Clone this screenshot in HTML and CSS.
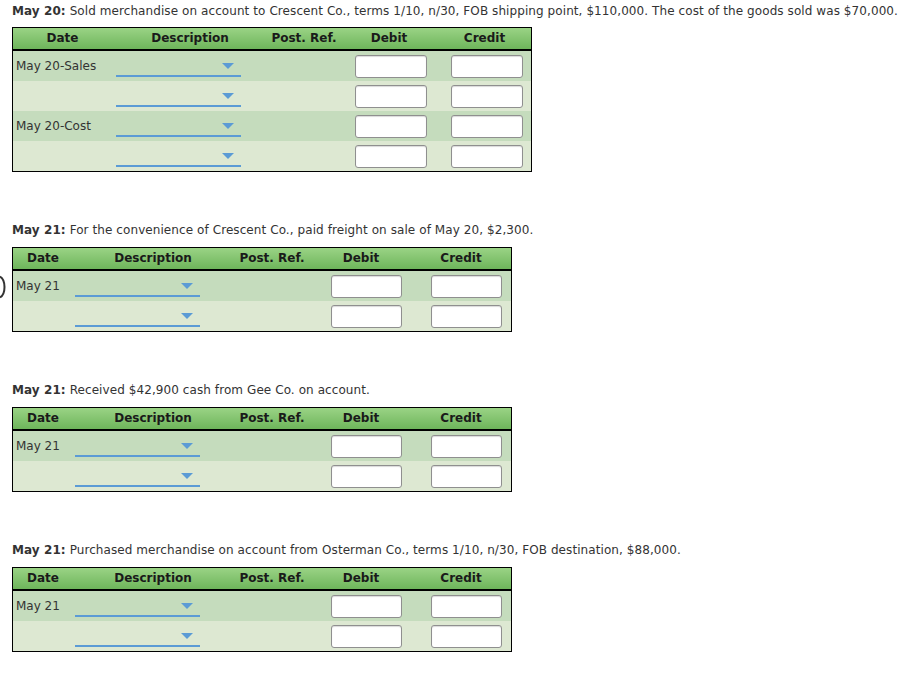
FILE: index.html
```html
<!DOCTYPE html>
<html>
<head>
<meta charset="utf-8">
<link rel="stylesheet" href="styles.css">
</head>
<body>
<div class="page">
  <section class="entry">
    <p class="title"><b>May 20:</b> Sold merchandise on account to Crescent Co., terms 1/10, n/30, FOB shipping point, $110,000. The cost of the goods sold was $70,000.</p>
    <div class="journal wide">
      <div class="row head"><div>Date</div><div>Description</div><div>Post. Ref.</div><div>Debit</div><div>Credit</div></div>
      <div class="row odd"><div class="date">May 20-Sales</div><div class="desc"><span class="dd"></span></div><div></div><div class="amt"><input type="text"></div><div class="amt c2"><input type="text"></div></div>
      <div class="row even"><div class="date"></div><div class="desc"><span class="dd"></span></div><div></div><div class="amt"><input type="text"></div><div class="amt c2"><input type="text"></div></div>
      <div class="row odd"><div class="date">May 20-Cost</div><div class="desc"><span class="dd"></span></div><div></div><div class="amt"><input type="text"></div><div class="amt c2"><input type="text"></div></div>
      <div class="row even"><div class="date"></div><div class="desc"><span class="dd"></span></div><div></div><div class="amt"><input type="text"></div><div class="amt c2"><input type="text"></div></div>
    </div>
  </section>

  <section class="entry">
    <p class="title"><b>May 21:</b> For the convenience of Crescent Co., paid freight on sale of May 20, $2,300.</p>
    <div class="journal narrow">
      <svg class="paren" width="7" height="24" viewBox="0 0 7 24"><path d="M0 1.5 C6 5 6 19 0 22.5" fill="none" stroke="#333" stroke-width="2"/></svg>
      <div class="row head"><div>Date</div><div>Description</div><div>Post. Ref.</div><div>Debit</div><div>Credit</div></div>
      <div class="row odd"><div class="date">May 21</div><div class="desc"><span class="dd"></span></div><div></div><div class="amt"><input type="text"></div><div class="amt"><input type="text"></div></div>
      <div class="row even"><div class="date"></div><div class="desc"><span class="dd"></span></div><div></div><div class="amt"><input type="text"></div><div class="amt"><input type="text"></div></div>
    </div>
  </section>

  <section class="entry">
    <p class="title"><b>May 21:</b> Received $42,900 cash from Gee Co. on account.</p>
    <div class="journal narrow">
      <div class="row head"><div>Date</div><div>Description</div><div>Post. Ref.</div><div>Debit</div><div>Credit</div></div>
      <div class="row odd"><div class="date">May 21</div><div class="desc"><span class="dd"></span></div><div></div><div class="amt"><input type="text"></div><div class="amt"><input type="text"></div></div>
      <div class="row even"><div class="date"></div><div class="desc"><span class="dd"></span></div><div></div><div class="amt"><input type="text"></div><div class="amt"><input type="text"></div></div>
    </div>
  </section>

  <section class="entry">
    <p class="title"><b>May 21:</b> Purchased merchandise on account from Osterman Co., terms 1/10, n/30, FOB destination, $88,000.</p>
    <div class="journal narrow">
      <div class="row head"><div>Date</div><div>Description</div><div>Post. Ref.</div><div>Debit</div><div>Credit</div></div>
      <div class="row odd"><div class="date">May 21</div><div class="desc"><span class="dd"></span></div><div></div><div class="amt"><input type="text"></div><div class="amt"><input type="text"></div></div>
      <div class="row even"><div class="date"></div><div class="desc"><span class="dd"></span></div><div></div><div class="amt"><input type="text"></div><div class="amt"><input type="text"></div></div>
    </div>
  </section>
</div>
</body>
</html>
```

FILE: styles.css
```css
html, body {
  margin: 0;
  padding: 0;
  background: #fff;
}
body {
  font-family: "DejaVu Sans", Verdana, sans-serif;
  font-size: 12px;
  color: #333;
}
.page {
  padding: 3px 12px 0 12px;
}
.entry {
  margin-bottom: 50px;
}
.title {
  margin: 0 0 9px 0;
  line-height: 16px;
  white-space: nowrap;
  letter-spacing: 0.08px;
}
.entry:first-child .title {
  margin-bottom: 8px;
}
.title b {
  color: #333;
}
.journal {
  position: relative;
  border: 1px solid #000;
  box-sizing: border-box;
}
.wide { width: 520px; }
.narrow { width: 500px; }
.row {
  display: grid;
  height: 30px;
}
.wide .row { grid-template-columns: 99px 156px 72px 98px 93px; }
.narrow .row { grid-template-columns: 60px 160px 78px 100px 100px; }
.row.head {
  height: 21px;
  border-bottom: 2px solid #000;
  background: linear-gradient(#9ad385, #6eb55b);
  font-weight: bold;
  color: #1a1a1a;
  text-align: center;
  line-height: 21px;
}
.row.odd { background: #c5dcbd; }
.row.even { background: #dde8d2; }
.date {
  padding: 8px 0 0 3px;
  line-height: 14px;
  white-space: nowrap;
}
.desc {
  position: relative;
}
.dd {
  position: absolute;
  top: 24px;
  width: 125px;
  height: 2px;
  background: #5b9bd5;
}
.wide .dd { left: 4px; }
.narrow .dd { left: 2px; }
.dd::after {
  content: "";
  position: absolute;
  right: 7px;
  top: -12px;
  border-left: 6px solid transparent;
  border-right: 6px solid transparent;
  border-top: 6px solid #5b9bd5;
}
.amt {
  padding-top: 4px;
}
.wide .amt { padding-left: 15px; }
.wide .amt.c2 { padding-left: 13px; }
.narrow .amt { padding-left: 20px; }
.amt input {
  display: block;
  box-sizing: border-box;
  width: 72px;
  height: 23px;
  margin: 0;
  padding: 0 3px;
  border: 1px solid #8f8f8f;
  border-radius: 3px;
  background: #fff;
  box-shadow: inset 0 1px 1px rgba(0,0,0,0.15);
  font: inherit;
}
.narrow .amt input { width: 71px; }
.paren {
  position: absolute;
  left: -13px;
  top: 27px;
}
```
